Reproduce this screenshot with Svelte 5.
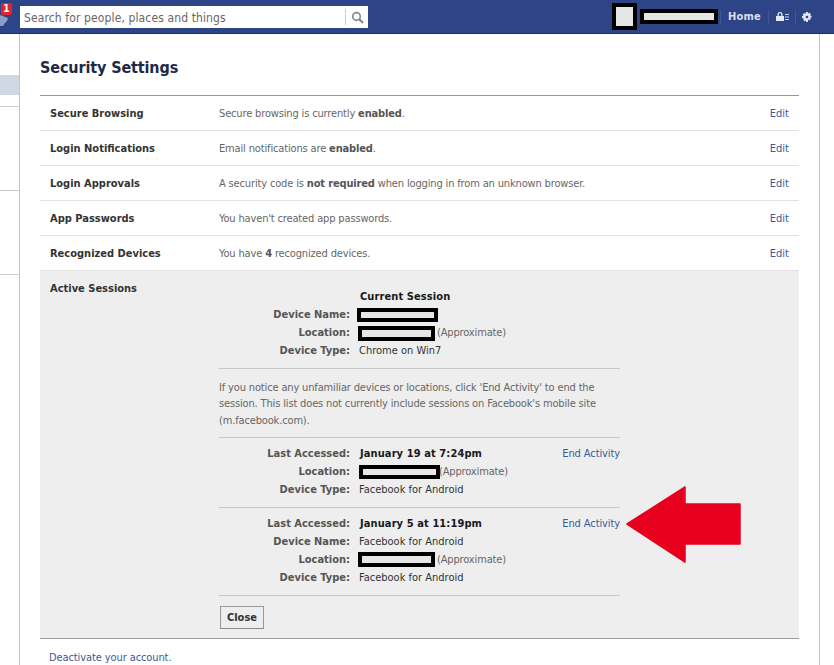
<script lang="ts">
  const settings = [
    { label: 'Secure Browsing', parts: ['Secure browsing is currently ', 'enabled', '.'] },
    { label: 'Login Notifications', parts: ['Email notifications are ', 'enabled', '.'] },
    { label: 'Login Approvals', parts: ['A security code is ', 'not required', ' when logging in from an unknown browser.'] },
    { label: 'App Passwords', parts: ["You haven't created app passwords."] },
    { label: 'Recognized Devices', parts: ['You have ', '4', ' recognized devices.'] }
  ];
</script>

<div class="page">
  <header class="topbar">
    <div class="jewel">
      <svg class="globe" width="8" height="12" viewBox="0 0 8 12"><path d="M0 1l3 1 2 1 3 1-1 3-2 2-2 3H0z" fill="#8b9dc3" /></svg>
      <span class="badge">1</span>
    </div>
    <div class="search">
      <span class="placeholder">Search for people, places and things</span>
      <span class="search-btn">
        <svg width="13" height="13" viewBox="0 0 13 13" fill="none" stroke="#8a8a8a">
          <circle cx="5.5" cy="5.5" r="3.8" stroke-width="1.7" />
          <path d="M8.4 8.4L12 12" stroke-width="2.2" />
        </svg>
      </span>
    </div>
    <div class="spacer"></div>
    <div class="redact avatar"></div>
    <div class="redact username"></div>
    <span class="sep"></span>
    <span class="home">Home</span>
    <span class="sep"></span>
    <svg class="lock" width="13" height="9" viewBox="0 0 13 9">
      <path d="M0 4h8v5H0zM1.500 4V2.500a2.500 2.500 0 0 1 5 0V4H5.200V2.500a1.200 1.200 0 0 0-2.400 0V4z" fill="#e4e8f2" />
      <path d="M9 2h4v1H9zM9 4.500h4v1H9zM9 7h4v1H9z" fill="#c6cfe3" />
    </svg>
    <span class="sep second"></span>
    <svg class="gear" width="10" height="10" viewBox="0 0 11 11">
      <path d="M4.500 0h2l.3 1.600 1.400-.9 1.500 1.500-.9 1.400 1.700.4v2l-1.700.3.900 1.400-1.500 1.500-1.400-.9L6.500 11h-2l-.3-1.700-1.400.9-1.500-1.500.9-1.400L0 6.500v-2l1.700-.4-.9-1.400 1.500-1.500 1.400.9z" fill="#e4e8f2" />
      <circle cx="5.500" cy="5.500" r="1.500" fill="#2d4486" />
    </svg>
  </header>

  <div class="body">
    <aside class="sidenav">
      <div class="nav-active"></div>
      <div class="nav-block first"></div>
      <div class="nav-block"></div>
      <div class="nav-block"></div>
    </aside>

    <main class="content">
      <h1>Security Settings</h1>
      <div class="table">
        {#each settings as row}
          <div class="row">
            <div class="label">{row.label}</div>
            <div class="value">
              {row.parts[0]}{#if row.parts[1]}<b>{row.parts[1]}</b>{/if}{row.parts[2] ?? ''}
            </div>
            <a class="edit" href="#edit">Edit</a>
          </div>
        {/each}

        <div class="active">
          <div class="label">Active Sessions</div>
          <div class="sessions">
            <section class="block current">
              <div class="pair"><span></span><b class="dark">Current Session</b></div>
              <div class="pair"><span class="key">Device Name:</span><span class="val"><i class="redact r1"></i></span></div>
              <div class="pair"><span class="key">Location:</span><span class="val"><i class="redact r2"></i> <span class="approx">(Approximate)</span></span></div>
              <div class="pair"><span class="key">Device Type:</span><span class="val">Chrome on Win7</span></div>
            </section>

            <p class="notice">If you notice any unfamiliar devices or locations, click 'End Activity' to end the session. This list does not currently include sessions on Facebook's mobile site (m.facebook.com).</p>

            <section class="block">
              <a class="end" href="#end">End Activity</a>
              <div class="pair"><span class="key">Last Accessed:</span><b class="dark">January 19 at 7:24pm</b></div>
              <div class="pair"><span class="key">Location:</span><span class="val"><i class="redact r3"></i><span class="approx">(Approximate)</span></span></div>
              <div class="pair"><span class="key">Device Type:</span><span class="val">Facebook for Android</span></div>
            </section>

            <section class="block">
              <a class="end" href="#end">End Activity</a>
              <div class="pair"><span class="key">Last Accessed:</span><b class="dark">January 5 at 11:19pm</b></div>
              <div class="pair"><span class="key">Device Name:</span><span class="val">Facebook for Android</span></div>
              <div class="pair"><span class="key">Location:</span><span class="val"><i class="redact r2"></i> <span class="approx">(Approximate)</span></span></div>
              <div class="pair"><span class="key">Device Type:</span><span class="val">Facebook for Android</span></div>
            </section>

            <div class="footer"><button>Close</button></div>
          </div>
          <svg class="arrow" width="116" height="78" viewBox="0 0 116 78">
            <path d="M59 1L1 38l58 38V58h55V18H59z" fill="#e6001e" stroke="#e6001e" stroke-width="1.500" stroke-linejoin="round" />
          </svg>
        </div>
        <div class="deactivate"><a href="#deactivate">Deactivate your account.</a></div>
      </div>
    </main>
  </div>
</div>

<style>
  :global(body) {
    margin: 0;
    background: #fff;
  }

  .page {
    width: 834px;
    height: 665px;
    overflow: hidden;
    font-family: "DejaVu Sans Condensed", "DejaVu Sans", sans-serif;
    font-size: 11px;
    color: #333;
  }

  .topbar {
    height: 33px;
    background: #2d4486;
    border-bottom: 1px solid #1c2f6b;
    display: flex;
    align-items: center;
    position: relative;
  }

  .jewel {
    width: 20px;
    height: 33px;
    position: relative;
    flex: none;
  }

  .globe {
    position: absolute;
    left: 0;
    top: 14px;
  }

  .badge {
    position: absolute;
    left: 1px;
    top: 3px;
    width: 11px;
    height: 12px;
    background: #e0242c;
    border-radius: 2px;
    color: #fff;
    font-weight: bold;
    font-size: 10px;
    line-height: 12px;
    text-align: center;
  }

  .search {
    width: 348px;
    height: 22px;
    background: #fff;
    display: flex;
    align-items: center;
    flex: none;
    box-sizing: border-box;
    margin-top: 1px;
  }

  .placeholder {
    flex: 1;
    padding: 1px 0 0 4px;
    color: #666;
    font-size: 12px;
    letter-spacing: 0.12px;
  }

  .search-btn {
    width: 22px;
    height: 16px;
    border-left: 1px solid #ccc;
    display: flex;
    align-items: center;
    justify-content: center;
  }

  .spacer {
    flex: 1;
  }

  .redact {
    display: block;
    box-sizing: border-box;
    border: 4px solid #000;
    background: #e6e6e6;
    flex: none;
  }

  .avatar {
    width: 25px;
    height: 27px;
    margin-right: 3px;
  }

  .username {
    width: 78px;
    height: 15px;
  }

  .sep {
    width: 1px;
    height: 14px;
    background: #40589a;
    margin-left: 2px;
    flex: none;
  }

  .home {
    color: #d8dfea;
    font-weight: bold;
    font-size: 11px;
    letter-spacing: 0.2px;
    margin: 0 5px 0 7px;
  }

  .lock {
    margin-left: 7px;
  }

  .sep.second {
    margin-left: 6px;
  }

  .gear {
    margin: 0 22px 0 6px;
  }

  .body {
    display: flex;
    height: 631px;
  }

  .sidenav {
    width: 19px;
    border-right: 1px solid #c4c4c4;
    flex: none;
    padding-top: 41px;
  }

  .nav-active {
    height: 20px;
    background: #d0d8e5;
  }

  .nav-block {
    height: 83px;
    border-bottom: 1px solid #ccc;
  }

  .nav-block.first {
    height: 11px;
  }

  .content {
    width: 759px;
    padding: 0 20px;
    border-right: 1px solid #c4c4c4;
    flex: none;
  }

  h1 {
    margin: 0;
    padding-top: 23px;
    height: 38px;
    font-size: 16px;
    line-height: 21px;
    font-weight: bold;
    letter-spacing: -0.12px;
    color: #1c2a47;
  }

  .table {
    border-top: 1px solid #999;
  }

  .row {
    display: flex;
    height: 34px;
    align-items: center;
    border-bottom: 1px solid #e2e2e2;
    padding: 0 10px;
  }

  .label {
    width: 169px;
    flex: none;
    font-weight: bold;
    color: #333;
  }

  .value {
    flex: 1;
    color: #666;
    letter-spacing: -0.15px;
  }

  .value b {
    color: #555;
  }

  a {
    color: #3b5998;
    text-decoration: none;
  }

  .edit {
    color: #3b5998;
  }

  .active {
    position: relative;
    display: flex;
    background: #eee;
    border-bottom: 1px solid #999;
    padding: 11px 10px 0;
    height: 356px;
  }

  .sessions {
    width: 401px;
    flex: none;
  }

  .block {
    position: relative;
    padding: 7px 0 8px;
    border-bottom: 1px solid #c8c8c8;
  }

  .block.current {
    padding-top: 6px;
    padding-bottom: 8px;
  }

  .pair {
    display: flex;
    height: 18px;
    line-height: 18px;
    gap: 9px;
    align-items: center;
    color: #333;
  }

  .pair > :first-child {
    width: 131px;
    text-align: right;
    flex: none;
  }

  .key {
    font-weight: bold;
    color: #555;
  }

  .dark {
    color: #1a1a1a;
    margin-left: 1px;
    letter-spacing: 0.1px;
  }

  .val {
    display: flex;
    align-items: center;
    gap: 0;
  }

  .approx {
    color: #666;
    margin-left: 2px;
    letter-spacing: -0.15px;
  }

  .redact.r1 {
    width: 81px;
    height: 14px;
    margin-left: -2px;
  }

  .redact.r2 {
    width: 77px;
    height: 15px;
    margin-left: -1px;
  }

  .redact.r3 {
    width: 81px;
    height: 14px;
    margin-right: -3px;
  }

  .notice {
    margin: 0;
    padding: 10.5px 0 7.5px;
    line-height: 16.5px;
    color: #666;
    letter-spacing: -0.15px;
    border-bottom: 1px solid #c8c8c8;
  }

  .end {
    position: absolute;
    right: 0;
    top: 7px;
    line-height: 18px;
    letter-spacing: -0.1px;
  }

  .footer {
    padding-top: 10px;
  }

  button {
    width: 44px;
    height: 23px;
    padding: 0;
    font: bold 11px "DejaVu Sans Condensed", "DejaVu Sans", sans-serif;
    color: #333;
    background: #eee;
    border: 1px solid #999;
    border-bottom-color: #888;
    display: block;
    margin-left: 1px;
  }

  .arrow {
    position: absolute;
    left: 586px;
    top: 215px;
  }

  .deactivate {
    padding: 12px 9px;
    color: #3b5998;
    letter-spacing: -0.1px;
  }
</style>
